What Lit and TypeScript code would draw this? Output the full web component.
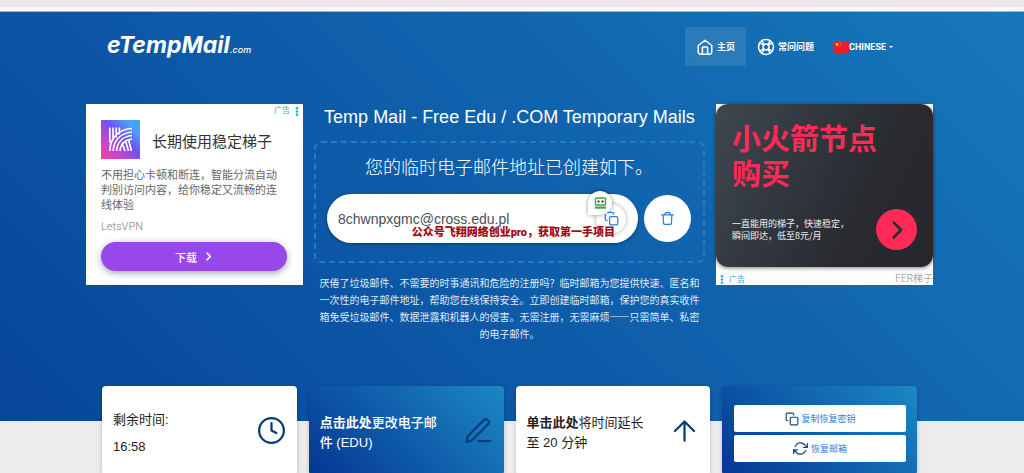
import { LitElement, html, css, svg } from "lit";
import { customElement, property } from "lit/decorators.js";

const reset = css`
  * { box-sizing: border-box; }
  button, input { font: inherit; color: inherit; border: 0; background: none; padding: 0; margin: 0; }
  button { cursor: pointer; }
  a { color: inherit; text-decoration: none; }
  h1, h2, p { margin: 0; font-weight: 400; }
  svg { display: block; flex: none; }
`;

const shapes: Record<string, unknown> = {
  home: svg`<path d="M3 10 12 3l9 7v9a2.5 2.5 0 0 1-2.500 2.500h-13A2.500 2.500 0 0 1 3 19z"/><path d="M8.500 21.500V13a1 1 0 0 1 1-1h5a1 1 0 0 1 1 1v8.500"/>`,
  help: svg`<circle cx="12" cy="12" r="10"/><circle cx="12" cy="12" r="4"/><path d="m3.500 6.500 5.500 3M6.500 3.500l3 5.500M17.500 3.500l-3 5.500M20.500 6.500l-5.500 3M20.500 17.500l-5.500-3M17.500 20.500l-3-5.500M6.500 20.500l3-5.500M3.500 17.500l5.500-3"/>`,
  copy: svg`<rect x="9" y="9" width="13" height="13" rx="2"/><path d="M5 15H4a2 2 0 0 1-2-2V4a2 2 0 0 1 2-2h9a2 2 0 0 1 2 2v1"/>`,
  trash: svg`<path d="M2.500 6h19M8 6V4a1.500 1.500 0 0 1 1.500-1.500h5A1.500 1.500 0 0 1 16 4v2M5 6l.7 14a2 2 0 0 0 2 1.500h8.600a2 2 0 0 0 2-1.500L19 6"/>`,
  clock: svg`<circle cx="12" cy="12" r="11"/><path d="M12 5.500V12l4.300 2.200"/>`,
  pen: svg`<path d="M1.500 22c0-3 .4-4.300 1.600-5.500L16.700 2.800a2.600 2.600 0 0 1 3.700 3.700L6.700 20.200C5.500 21.400 4.300 22 1.500 22zM12 21.500h10.500"/>`,
  up: svg`<path d="M12 21V4M3.500 12.500 12 4l8.500 8.500"/>`,
  refresh: svg`<path d="M23 4v6h-6M1 20v-6h6M3.500 9a9 9 0 0 1 14.900-3.400L23 10M1 14l4.600 4.400A9 9 0 0 0 20.500 15"/>`,
  right: svg`<path d="m8 3 9 9-9 9"/>`,
};

const icon = (name: string, size: number, stroke = 2) => html`
  <svg width=${size} height=${size} viewBox="0 0 24 24" fill="none" stroke="currentColor"
    stroke-width=${stroke} stroke-linecap="round" stroke-linejoin="round" aria-hidden="true">${shapes[name]}</svg>`;

const dots = html`<svg width="4" height="9" viewBox="0 0 4 9" fill="currentColor" aria-hidden="true">
  <circle cx="2" cy="1.300" r="1.300"/><circle cx="2" cy="4.500" r="1.300"/><circle cx="2" cy="7.700" r="1.300"/></svg>`;

@customElement("site-header")
class SiteHeader extends LitElement {
  static styles = [reset, css`
    :host { display: flex; justify-content: space-between; align-items: center; padding: 0 13px 0 5px; }
    .logo { display: flex; align-items: baseline; color: #fff; font-style: italic; line-height: 30px; padding-top: 2px; font-family: Inter, sans-serif; }
    .name { font-size: 23px; font-weight: 700; }
    .tld { font-size: 9px; font-weight: 500; }
    nav { display: flex; align-items: center; color: #fff; font: 700 9px Roboto, "Noto Sans CJK SC", sans-serif; }
    .link { display: flex; align-items: center; gap: 3px; height: 39px; padding: 0 11px; border-radius: 2px; }
    .active { background: rgba(255, 255, 255, .1); }
    .lang { gap: 0; padding-left: 9px; }
    .caret { border: 2px solid transparent; border-top-color: #fff; border-bottom: 0; margin-left: 3px; }
  `];
  render() {
    return html`
      <a class="logo" href="#"><span class="name">eTempMail</span><span class="tld">.com</span></a>
      <nav>
        <a class="link active" href="#">${icon("home", 18)}主页</a>
        <a class="link" href="#faq">${icon("help", 18)}常问问题</a>
        <button class="link lang" aria-haspopup="true">
          <svg width="15" height="12" viewBox="0 0 15 12" aria-hidden="true">
            <rect width="15" height="12" rx="2" fill="#ee1c25"/>
            <path d="m3 1.500.5 1.300h1.400l-1.100.9.4 1.400L3 4.300l-1.200.8.4-1.400-1.100-.9h1.400z" fill="#ff0"/>
            <g fill="#f8a01c"><circle cx="5.800" cy="1.300" r=".5"/><circle cx="7" cy="2.500" r=".5"/><circle cx="7" cy="4.200" r=".5"/><circle cx="5.800" cy="5.500" r=".5"/></g>
          </svg>CHINESE<span class="caret"></span>
        </button>
      </nav>`;
  }
}

@customElement("vpn-ad")
class VpnAd extends LitElement {
  static styles = [reset, css`
    :host { display: block; background: #fff; height: 181px; padding: 2px 4px 0 15px; font-family: Roboto, "Noto Sans CJK SC", sans-serif; }
    .tag { display: flex; justify-content: flex-end; align-items: center; gap: 5px; color: #1cb5cf; font-size: 8px; line-height: 10px; margin-bottom: 4px; }
    .head { display: flex; align-items: center; gap: 12px; }
    h2 { color: #333; font-size: 15px; font-weight: 400; line-height: 22px; padding-top: 4px; }
    .body { color: #666; font-size: 11px; line-height: 15px; margin-top: 9px; white-space: nowrap; }
    .brand { color: #808080; font-size: 11px; font-weight: 300; line-height: 14px; margin-top: 7px; }
    .cta { display: flex; align-items: center; justify-content: center; gap: 7px; width: calc(100% - 12px); height: 29px; margin-top: 8px;
      border-radius: 15px; background: #9747ea; color: #fff; font-size: 11px; font-weight: 500; box-shadow: 0 2px 7px rgba(40, 50, 80, .45); }
  `];
  render() {
    return html`
      <div class="tag">广告 ${dots}</div>
      <div class="head">
        <svg width="39" height="39" viewBox="0 0 39 39" aria-hidden="true">
          <defs><linearGradient id="g" x1="0" y1="1" x2="1" y2="0">
            <stop offset="0" stop-color="#f43f9f"/><stop offset=".3" stop-color="#c446cf"/><stop offset=".55" stop-color="#7050f5"/><stop offset=".8" stop-color="#4a9ef8"/><stop offset="1" stop-color="#42a8f5"/>
          </linearGradient></defs>
          <rect width="39" height="39" fill="url(#g)"/>
          <g fill="none" stroke="#fff" stroke-width="1.700">
            <path d="M8.800 7.500v15M12 7.500v13M15.200 7.500v10M18.400 7.500v7M31 8.500C19 9 9 17 8.800 31M31 12C20 13 12.500 20 12.200 31M31 15.500C22 16.500 16 22 15.600 31M31 19c-7 1-11.500 5-12 12M21 22.500l3 8.500M24.500 20.500l3 10.500M27.500 19.500l3 11.500"/>
          </g>
        </svg>
        <h2>长期使用稳定梯子</h2>
      </div>
      <p class="body">不用担心卡顿和断连，智能分流自动<br>判别访问内容，给你稳定又流畅的连<br>线体验</p>
      <p class="brand">LetsVPN</p>
      <button class="cta">下载 ${icon("right", 9, 4)}</button>`;
  }
}

@customElement("rocket-ad")
class RocketAd extends LitElement {
  static styles = [reset, css`
    :host { display: block; background: #fff; height: 181px; font-family: "Noto Sans CJK SC", sans-serif; }
    .panel { height: 163px; padding: 16px; border-radius: 12px; background: linear-gradient(115deg, #3e4751, #292b30 65%, #25272b); box-shadow: 0 1px 4px rgba(0, 0, 0, .5); }
    h2 { color: #ff2a55; font-size: 29px; font-weight: 700; line-height: 35px; }
    .row { display: flex; align-items: center; justify-content: space-between; margin-top: 19px; }
    p { color: #eee; font-size: 9px; line-height: 12px; white-space: nowrap; }
    .go { display: grid; place-items: center; width: 41px; height: 41px; border-radius: 50%; background: #ff2a55; color: #292b30; }
    .foot { display: flex; align-items: center; justify-content: space-between; height: 18px; padding: 6px 0 0 4px; }
    .tag { display: flex; align-items: center; gap: 5px; color: #1cb5cf; font-size: 8px; line-height: 12px; }
    .brand { color: #888; font: 300 10px/12px Roboto, "Noto Sans CJK SC", sans-serif; }
  `];
  render() {
    return html`
      <div class="panel">
        <h2>小火箭节点<br>购买</h2>
        <div class="row">
          <p>一直能用的梯子，快速稳定，<br>瞬间即达，低至8元/月</p>
          <button class="go" aria-label="前往">${icon("right", 20, 3)}</button>
        </div>
      </div>
      <div class="foot"><span class="tag">${dots} 广告</span><span class="brand">FER梯子</span></div>`;
  }
}

@customElement("mail-box")
class MailBox extends LitElement {
  static styles = [reset, css`
    :host { display: block; color: #fff; text-align: center; font-family: "Liberation Sans", "Noto Sans CJK SC", sans-serif; }
    h1 { font-size: 18px; line-height: 26px; white-space: nowrap; }
    .frame { height: 122px; margin-top: 11px; padding: 11px 12px 0 11px; border: 2px dashed #1a80bf; border-radius: 7px; }
    label { display: block; font-size: 18px; line-height: 24px; font-weight: 300; font-family: "Noto Sans CJK SC", sans-serif; white-space: nowrap; }
    .row { display: flex; align-items: center; gap: 6px; margin-top: 16px; }
    .field { position: relative; display: flex; align-items: center; flex: 1; height: 49px; padding: 0 12px 0 11px; border-radius: 25px; background: #fff; box-shadow: 0 1px 3px rgba(0, 0, 0, .4); }
    input { flex: 1; min-width: 0; color: #495057; font: 14px "Liberation Sans", sans-serif; outline: 0; }
    .round { display: grid; place-items: center; border-radius: 50%; background: #fff; color: #2f80d8; }
    .copy { width: 30px; height: 30px; box-shadow: 0 0 4px rgba(0, 0, 0, .35); }
    .trash { width: 47px; height: 47px; }
    .filler { position: absolute; right: 26px; top: -3px; display: grid; place-items: center; width: 24px; height: 24px; border-radius: 12px 12px 12px 0; background: #fff; box-shadow: 0 0 4px rgba(0, 0, 0, .4); }
    .note { position: absolute; right: 23px; bottom: 3px; color: #a00d12; font: 900 11px/14px Roboto, "Noto Sans CJK SC", sans-serif; white-space: nowrap; }
    .intro { margin-top: 11px; padding: 0 4px; color: #dfeaf5; font: 10px/17px "Noto Sans CJK SC", sans-serif; }
  `];
  render() {
    return html`
      <h1>Temp Mail - Free Edu / .COM Temporary Mails</h1>
      <div class="frame">
        <label for="mail">您的临时电子邮件地址已创建如下。</label>
        <div class="row">
          <div class="field">
            <input id="mail" type="text" readonly value="8chwnpxgmc@cross.edu.pl">
            <button class="round copy" aria-label="复制">${icon("copy", 15)}</button>
            <span class="filler"><svg width="13" height="13" viewBox="0 0 13 13" aria-hidden="true">
              <rect x="1.500" y="1" width="10" height="7" rx="1" fill="#fff" stroke="#40a82f" stroke-width="1.400"/>
              <path d="M3.500 3.500h2v2h-2zM7.500 3.500h2v2h-2z" fill="#333"/><path d="M1 9.500h11v2.200H1z" fill="#40a82f"/></svg></span>
            <span class="note">公众号飞翔网络创业pro，获取第一手项目</span>
          </div>
          <button class="round trash" aria-label="删除">${icon("trash", 15)}</button>
        </div>
      </div>
      <p class="intro" lang="zh-CN">厌倦了垃圾邮件、不需要的时事通讯和危险的注册吗？临时邮箱为您提供快速、匿名和一次性的电子邮件地址，帮助您在线保持安全。立即创建临时邮箱，保护您的真实收件箱免受垃圾邮件、数据泄露和机器人的侵害。无需注册，无需麻烦——只需简单、私密的电子邮件。</p>`;
  }
}

@customElement("action-card")
class ActionCard extends LitElement {
  @property() icon = "";
  @property({ type: Boolean, reflect: true }) blue = false;
  static styles = [reset, css`
    :host { display: flex; align-items: center; justify-content: space-between; height: 89px; padding: 0 12px 0 11px; border-radius: 4px; background: #fff; color: #222;
      box-shadow: 0 1px 4px rgba(0, 0, 0, .2); font: 13px/20px "Liberation Sans", "Noto Sans CJK SC", sans-serif; }
    :host([blue]) { background: linear-gradient(45deg, #053693, #1b88c3); color: #fff; font-weight: 500; }
    .text { padding-top: 4px; }
    .mark { color: #033e7b; }
  `];
  render() {
    return html`<div class="text"><slot></slot></div><span class="mark">${icon(this.icon, 27)}</span>`;
  }
}

@customElement("app-root")
class AppRoot extends LitElement {
  static styles = [reset, css`
    :host { display: block; min-height: 100vh; background: #ececec; font-family: "Liberation Sans", "Noto Sans CJK SC", sans-serif; overflow: hidden; }
    .strip { height: 12px; background: #fdf6f8; border-top: 7px solid #f0e5ed; border-bottom: 1px solid #a9b3d3; }
    .hero { height: 409px; padding: 15px 5px 0 0; background: linear-gradient(45deg, #07459a, #1778bb); }
    .wrap { max-width: 815px; margin: 0 auto; }
    .main { display: grid; grid-template-columns: 217px minmax(0, 1fr) 217px; gap: 11px; max-width: 847px; margin: 38px auto 0; align-items: start; }
    .cards { padding-right: 5px; margin-top: -35px; }
    .grid { display: grid; grid-template-columns: repeat(4, minmax(0, 1fr)); gap: 12px; }
    .change { max-width: 120px; }
    strong { font-weight: 700; }
    .time { padding-top: 2px; }
    .time p + p { margin-top: 7px; }
    .restore { display: flex; flex-direction: column; gap: 3px; height: 89px; padding: 19px 11px 0 12px; border-radius: 4px; background: linear-gradient(45deg, #053693, #1b88c3); box-shadow: 0 1px 4px rgba(0, 0, 0, .2); }
    .restore button { display: flex; align-items: center; justify-content: center; gap: 3px; height: 27px; border-radius: 2px; background: #fff; color: #2f80d8; font: 9px "Noto Sans CJK SC", sans-serif; }
    .restore svg { color: #174478; }
  `];
  render() {
    return html`
      <div class="strip"></div>
      <section class="hero">
        <site-header class="wrap"></site-header>
        <main class="main"><vpn-ad></vpn-ad><mail-box></mail-box><rocket-ad></rocket-ad></main>
      </section>
      <section class="cards">
        <div class="wrap grid">
          <action-card icon="clock"><div class="time"><p>剩余时间:</p><p>16:58</p></div></action-card>
          <action-card icon="pen" blue><div class="change"><strong>点击此处</strong>更改电子邮件 (EDU)</div></action-card>
          <action-card icon="up"><div class="change"><strong>单击此处</strong>将时间延长至 20 分钟</div></action-card>
          <div class="restore">
            <button>${icon("copy", 14)}复制恢复密钥</button>
            <button>${icon("refresh", 15)}恢复邮箱</button>
          </div>
        </div>
      </section>`;
  }
}
